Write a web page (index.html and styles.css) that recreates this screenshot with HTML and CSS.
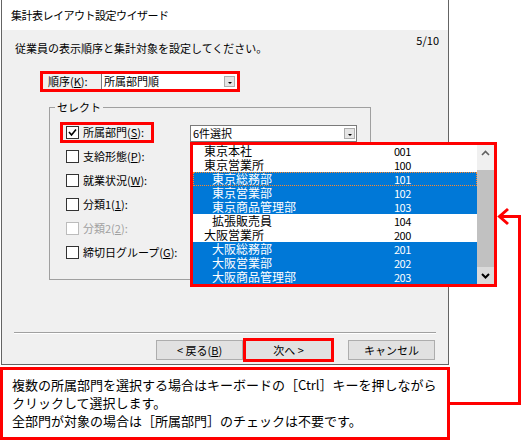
FILE: index.html
```html
<!DOCTYPE html>
<html lang="ja">
<head>
  <meta charset="UTF-8">
  <meta name="viewport" content="width=device-width, initial-scale=1.0">
  <title>集計表レイアウト設定ウイザード</title>
  <link rel="stylesheet" href="styles.css">
</head>
<body>
  <div class="stage">
    <div class="dialog">
      <div class="titlebar">集計表レイアウト設定ウイザード</div>
      <div class="dialog-body">
        <div class="head">
          <p class="lead">従業員の表示順序と集計対象を設定してください。</p>
          <span class="step">5/10</span>
        </div>

        <div class="order mark">
          <span class="order-label">順序(<u>K</u>):</span>
          <div class="combo order-combo">
            <span>所属部門順</span>
            <span class="drop-btn"></span>
          </div>
        </div>

        <fieldset class="group">
          <legend>セレクト</legend>
          <div class="group-rows">
            <div class="row">
              <label class="check mark">
                <span class="box">
                  <svg width="11" height="11" viewBox="0 0 11 11"><polyline points="2,5 4.5,8 9,2.5" fill="none" stroke="#000" stroke-width="1.6"/></svg>
                </span>
                <span>所属部門(<u>S</u>):</span>
              </label>
              <div class="combo dept-combo">
                <span>6件選択</span>
                <span class="drop-btn"></span>
              </div>
            </div>
            <div class="row">
              <label class="check"><span class="box"></span><span>支給形態(<u>P</u>):</span></label>
            </div>
            <div class="row">
              <label class="check"><span class="box"></span><span>就業状況(<u>W</u>):</span></label>
            </div>
            <div class="row">
              <label class="check"><span class="box"></span><span>分類1(<u>1</u>):</span></label>
            </div>
            <div class="row disabled">
              <label class="check"><span class="box"></span><span>分類2(<u>2</u>):</span></label>
            </div>
            <div class="row">
              <label class="check"><span class="box"></span><span>締切日グループ(<u>G</u>):</span></label>
            </div>
          </div>
        </fieldset>

        <div class="separator"></div>

        <div class="buttons">
          <button class="btn">&lt; 戻る(<u>B</u>)</button>
          <button class="btn next">次へ &gt;</button>
          <button class="btn cancel">キャンセル</button>
        </div>
      </div>
    </div>

    <div class="callout">
      <p>複数の所属部門を選択する場合はキーボードの［Ctrl］キーを押しながら</p>
      <p>クリックして選択します。</p>
      <p>全部門が対象の場合は［所属部門］のチェックは不要です。</p>
    </div>

    <!-- opened drop-down of the 所属部門 combo -->
    <div class="dept-list">
      <div class="list-rows">
        <div class="list-row first"><span class="name lv1">東京本社</span><span class="code">001</span></div>
        <div class="list-row"><span class="name lv1">東京営業所</span><span class="code">100</span></div>
        <div class="list-row sel focus"><span class="name lv2">東京総務部</span><span class="code">101</span></div>
        <div class="list-row sel"><span class="name lv2">東京営業部</span><span class="code">102</span></div>
        <div class="list-row sel"><span class="name lv2">東京商品管理部</span><span class="code">103</span></div>
        <div class="list-row"><span class="name lv2">拡張販売員</span><span class="code">104</span></div>
        <div class="list-row"><span class="name lv1">大阪営業所</span><span class="code">200</span></div>
        <div class="list-row sel"><span class="name lv2">大阪総務部</span><span class="code">201</span></div>
        <div class="list-row sel"><span class="name lv2">大阪営業部</span><span class="code">202</span></div>
        <div class="list-row sel"><span class="name lv2">大阪商品管理部</span><span class="code">203</span></div>
      </div>
      <div class="scrollbar">
        <div class="sb-btn">
          <svg width="17" height="17" viewBox="0 0 17 17"><polyline points="5,10 8.5,6.5 12,10" fill="none" stroke="#606060" stroke-width="1.6"/></svg>
        </div>
        <div class="sb-track"><div class="sb-thumb"></div></div>
        <div class="sb-btn down">
          <svg width="17" height="17" viewBox="0 0 17 17"><polyline points="5,7 8.5,10.5 12,7" fill="none" stroke="#000" stroke-width="2"/></svg>
        </div>
      </div>
    </div>

    <!-- arrow from the list to the note -->
    <svg class="connector" width="521" height="440" viewBox="0 0 521 440">
      <polyline points="499,216.5 519.5,216.5 519.5,403.5 448,403.5" fill="none" stroke="#f00" stroke-width="3"/>
      <polyline points="508,209 499.5,216.5 508,224" fill="none" stroke="#f00" stroke-width="3"/>
    </svg>
  </div>
</body>
</html>
```

FILE: styles.css
```css
/* wizard dialog screenshot */
* {
  box-sizing: border-box;
}

body {
  margin: 0;
  background: #fff;
  font-family: "Noto Sans CJK JP", "Noto Sans", sans-serif;
  font-size: 11px;
  color: #000;
}

u {
  text-decoration: underline;
}

.stage {
  position: relative;
  width: 521px;
  height: 440px;
  overflow: hidden;
}

.mark {
  outline: 3px solid #f00;
}

.dialog {
  margin-left: 1px;
  width: 448px;
  height: 365px;
  background: #f0f0f0;
  border: 1px solid #646464;
  border-top: 0;
}

.titlebar {
  height: 30px;
  line-height: 30px;
  padding-left: 9px;
  background: #fff;
  letter-spacing: -0.5px;
}

.dialog-body {
  padding: 4px 9px 0 13px;
}

.head {
  display: flex;
  justify-content: space-between;
  align-items: flex-start;
}

.lead {
  margin: 0;
  padding-top: 7px;
  line-height: 14px;
}

.step {
  line-height: 12px;
}

/* order row */
.order {
  display: flex;
  width: 194px;
  height: 15px;
  margin: 19px 0 0 28px;
}

.order-label {
  width: 58px;
  padding-left: 5px;
  line-height: 15px;
}

.combo {
  display: flex;
  align-items: center;
  justify-content: space-between;
  background: #fff;
}

.order-combo {
  flex: 1;
  border-left: 1px solid #7a7a7a;
  padding: 0 2px;
  line-height: 15px;
}

.drop-btn {
  display: flex;
  align-items: center;
  justify-content: center;
  width: 11px;
  height: 11px;
  background: #e5e5e5;
  border: 1px solid #acacac;
}

.drop-btn::after {
  content: "";
  margin-top: 3px;
  border-top: 2px solid #000;
  border-left: 2px solid transparent;
  border-right: 2px solid transparent;
}

/* group box */
.group {
  margin: 12px 0 0 34px;
  padding: 0;
  width: 322px;
  height: 179px;
  min-width: 0;
  border: 1px solid #a0a0a0;
}

.group legend {
  margin-left: 5px;
  padding: 0 2px;
  line-height: 13px;
}

.group-rows {
  display: flex;
  flex-direction: column;
  gap: 9px;
  padding: 11px 0 0 13px;
}

.row {
  display: flex;
  align-items: center;
  height: 15px;
}

.check {
  display: flex;
  align-items: center;
  gap: 4px;
  padding-left: 3px;
  line-height: 15px;
  white-space: nowrap;
}

.check.mark {
  width: 88px;
}

.box {
  display: flex;
  align-items: center;
  justify-content: center;
  width: 13px;
  height: 13px;
  border: 1px solid #333;
  background: #fff;
}

.row.disabled {
  color: #a0a0a0;
}

.row.disabled .box {
  border-color: #bcbcbc;
}

.dept-combo {
  flex-shrink: 0;
  width: 167px;
  height: 17px;
  margin: 2px 0 0 39px;
  padding: 0 1px 0 2px;
  border: 1px solid #7a7a7a;
  line-height: 15px;
}

/* footer */
.separator {
  height: 2px;
  margin: 52px 3px 0 -1px;
  border-top: 1px solid #a0a0a0;
  border-bottom: 1px solid #fff;
}

.buttons {
  display: flex;
  margin: 6px 0 0 141px;
}

.btn {
  width: 87px;
  height: 20px;
  padding: 0;
  border: 1px solid #adadad;
  background: #e1e1e1;
  font: inherit;
  color: #000;
}

.next {
  margin-left: 2px;
  outline: 3px solid #f00;
  outline-offset: -1px;
}

.cancel {
  margin-left: 16px;
}

/* note below the dialog */
.callout {
  margin-top: 2px;
  width: 450px;
  height: 73px;
  padding: 6px 0 0 9px;
  border: 3px solid #f00;
  background: #fff;
  font-size: 13px;
  line-height: 18px;
  white-space: nowrap;
}

.callout p {
  margin: 0;
}

/* drop-down list */
.dept-list {
  position: absolute;
  left: 190px;
  top: 142px;
  display: flex;
  width: 307px;
  height: 145px;
  border: 3px solid #f00;
  background: #fff;
}

.list-rows {
  flex: 1;
  overflow: hidden;
}

.list-row {
  display: grid;
  grid-template-columns: 201px 1fr;
  height: 14px;
  line-height: 14px;
  font-size: 12px;
  white-space: nowrap;
}

.list-row.first {
  margin-top: -1px;
}

.list-row.sel {
  background: #0078d7;
  color: #fff;
}

.list-row.focus {
  position: relative;
  z-index: 1;
  outline: 1px dotted #ff8728;
  outline-offset: -1px;
}

.lv1 {
  padding-left: 11px;
}

.lv2 {
  padding-left: 19px;
}

.code {
  font-size: 11px;
  letter-spacing: -0.5px;
}

.scrollbar {
  display: flex;
  flex-direction: column;
  width: 17px;
  background: #f0f0f0;
}

.sb-btn {
  height: 17px;
}

.sb-btn svg {
  display: block;
}

.sb-btn.down {
  background: #dadada;
}

.sb-track {
  flex: 1;
  padding-top: 8px;
}

.sb-thumb {
  height: 97px;
  background: #c1c1c1;
}

.connector {
  position: absolute;
  left: 0;
  top: 0;
  pointer-events: none;
}
```
